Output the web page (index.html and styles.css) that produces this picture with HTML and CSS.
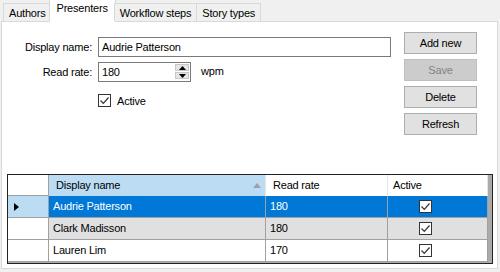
FILE: index.html
```html
<!DOCTYPE html>
<html lang="en">
<head>
    <meta charset="UTF-8">
    <title>Presenters</title>
    <link rel="stylesheet" href="styles.css">
</head>
<body>
    <div class="tabs">
        <div class="tab">Authors</div>
        <div class="tab active">Presenters</div>
        <div class="tab">Workflow steps</div>
        <div class="tab">Story types</div>
    </div>
    <div class="page">
        <div class="top">
            <div class="form">
                <label>Display name:</label>
                <div class="textbox name">Audrie Patterson</div>
                <label>Read rate:</label>
                <div class="rate">
                    <div class="textbox numeric">
                        <span class="value">180</span>
                        <div class="spin">
                            <div class="spin-btn"><svg width="7" height="4" viewBox="0 0 7 4"><path d="M0 4 L3.5 0 L7 4 Z" fill="#000"/></svg></div>
                            <div class="spin-btn"><svg width="7" height="4" viewBox="0 0 7 4"><path d="M0 0 L3.5 4 L7 0 Z" fill="#000"/></svg></div>
                        </div>
                    </div>
                    <span class="unit">wpm</span>
                </div>
                <span></span>
                <div class="check-row">
                    <span class="checkbox"><svg width="11" height="11" viewBox="0 0 11 11"><path d="M1.5 5.5 L4.3 8.3 L9.5 2.5" fill="none" stroke="#333" stroke-width="1.2"/></svg></span>
                    <span>Active</span>
                </div>
            </div>
            <div class="buttons">
                <button>Add new</button>
                <button disabled>Save</button>
                <button>Delete</button>
                <button>Refresh</button>
            </div>
        </div>
        <div class="grid-view">
            <div class="grid">
                <div class="hd rowhd"></div>
                <div class="hd sorted">Display name<svg class="sort" width="8" height="5" viewBox="0 0 8 5"><path d="M0 5 L4 0 L8 5 Z" fill="#a0a0a0"/></svg></div>
                <div class="hd">Read rate</div>
                <div class="hd last">Active</div>

                <div class="rowhd current"><svg width="5" height="8" viewBox="0 0 5 8"><path d="M0 0 L5 4 L0 8 Z" fill="#000"/></svg></div>
                <div class="cell sel">Audrie Patterson</div>
                <div class="cell sel">180</div>
                <div class="cell sel check"><span class="checkbox"><svg width="11" height="11" viewBox="0 0 11 11"><path d="M1.5 5.5 L4.3 8.3 L9.5 2.5" fill="none" stroke="#333" stroke-width="1.2"/></svg></span></div>

                <div class="rowhd"></div>
                <div class="cell alt">Clark Madisson</div>
                <div class="cell alt">180</div>
                <div class="cell alt check"><span class="checkbox"><svg width="11" height="11" viewBox="0 0 11 11"><path d="M1.5 5.5 L4.3 8.3 L9.5 2.5" fill="none" stroke="#333" stroke-width="1.2"/></svg></span></div>

                <div class="rowhd"></div>
                <div class="cell">Lauren Lim</div>
                <div class="cell">170</div>
                <div class="cell check"><span class="checkbox"><svg width="11" height="11" viewBox="0 0 11 11"><path d="M1.5 5.5 L4.3 8.3 L9.5 2.5" fill="none" stroke="#333" stroke-width="1.2"/></svg></span></div>
            </div>
        </div>
    </div>
</body>
</html>
```

FILE: styles.css
```css
body {
    margin: 0;
    width: 500px;
    height: 272px;
    background-color: #f0f0f0;
    font-family: "Liberation Sans", Arial, sans-serif;
    font-size: 11px;
    letter-spacing: -0.2px;
    color: #000;
    overflow: hidden;
}
.tabs {
    display: flex;
    align-items: flex-end;
    height: 22px;
    padding-left: 3px;
    position: relative;
    z-index: 1;
}
.tab {
    height: 17px;
    margin-bottom: 1px;
    padding: 0 5px;
    line-height: 18px;
    background-color: #f0f0f0;
    border: 1px solid #d9d9d9;
    border-bottom: none;
    margin-right: -1px;
}
.tab.active {
    height: 22px;
    margin-bottom: 0;
    margin-left: -2px;
    margin-right: -2px;
    padding: 0 7px;
    line-height: 17px;
    background-color: #fff;
}
.page {
    margin-left: 1px;
    margin-top: -1px;
    width: 495px;
    height: 246px;
    background-color: #fff;
    border: 1px solid #d9d9d9;
}
.top {
    display: flex;
    height: 152px;
}
.form {
    display: grid;
    grid-template-columns: 90px 293px;
    grid-template-rows: 20px 20px 12px;
    column-gap: 6px;
    row-gap: 5px;
    margin-top: 15px;
    align-content: start;
}
.form label {
    text-align: right;
    line-height: 20px;
}
.textbox {
    box-sizing: border-box;
    border: 1px solid #7a7a7a;
    background-color: #fff;
    padding-left: 3px;
    line-height: 18px;
}
.rate {
    display: flex;
    align-items: center;
    gap: 10px;
}
.numeric {
    width: 93px;
    height: 20px;
    display: flex;
    justify-content: space-between;
}
.spin {
    display: flex;
    flex-direction: column;
    gap: 1px;
    padding: 1px 1px 1px 0;
}
.spin-btn {
    width: 14px;
    height: 7px;
    box-sizing: border-box;
    background-color: #e5e5e5;
    border: 1px solid #c8c8c8;
    display: flex;
    align-items: center;
    justify-content: center;
}
.unit {
    margin-top: -2px;
}
.check-row {
    display: flex;
    align-items: center;
    gap: 6px;
    margin-top: 7px;
    height: 13px;
}
.checkbox {
    box-sizing: border-box;
    width: 13px;
    height: 13px;
    border: 1px solid #333;
    background-color: #fff;
    display: inline-flex;
    align-items: center;
    justify-content: center;
}
.buttons {
    display: flex;
    flex-direction: column;
    gap: 5px;
    margin-left: 13px;
    margin-top: 10px;
}
button {
    width: 73px;
    height: 22px;
    padding: 0;
    font-family: inherit;
    font-size: 11px;
    letter-spacing: -0.2px;
    color: #000;
    background-color: #e1e1e1;
    border: 1px solid #adadad;
}
button:disabled {
    background-color: #cccccc;
    border-color: #bfbfbf;
    color: #838383;
}
.grid-view {
    margin-left: 5px;
    width: 484px;
    height: 88px;
    border: 1px solid #222;
    background-color: #ababab;
}
.grid {
    display: grid;
    grid-template-columns: 41px 217px 122px 100px;
    grid-template-rows: 21px 22px 22px 22px;
    width: 480px;
}
.grid > div {
    box-sizing: border-box;
    border-right: 1px solid #a0a0a0;
    border-bottom: 1px solid #a0a0a0;
    padding-left: 4px;
    line-height: 21px;
    background-color: #fff;
    white-space: nowrap;
}
.grid .hd {
    border-right-color: #e5e5e5;
    border-bottom: none;
    padding-left: 7px;
    line-height: 21px;
}
.grid .hd.rowhd {
    border-right-color: #a0a0a0;
    border-bottom: 1px solid #a0a0a0;
}
.grid .hd.sorted {
    background-color: #bcdcf4;
    display: flex;
    justify-content: space-between;
    align-items: center;
    padding-right: 4px;
}
.grid .hd.last {
    padding-left: 5px;
}
.grid .rowhd {
    padding-left: 0;
}
.grid .rowhd.current {
    background-color: #bcdcf4;
    display: flex;
    align-items: center;
    padding-left: 6px;
}
.grid .cell.sel {
    background-color: #0078d7;
    color: #fff;
}
.grid .cell.alt {
    background-color: #e0e0e0;
}
.grid .cell.check {
    display: flex;
    align-items: center;
    padding-left: 31px;
}
```
